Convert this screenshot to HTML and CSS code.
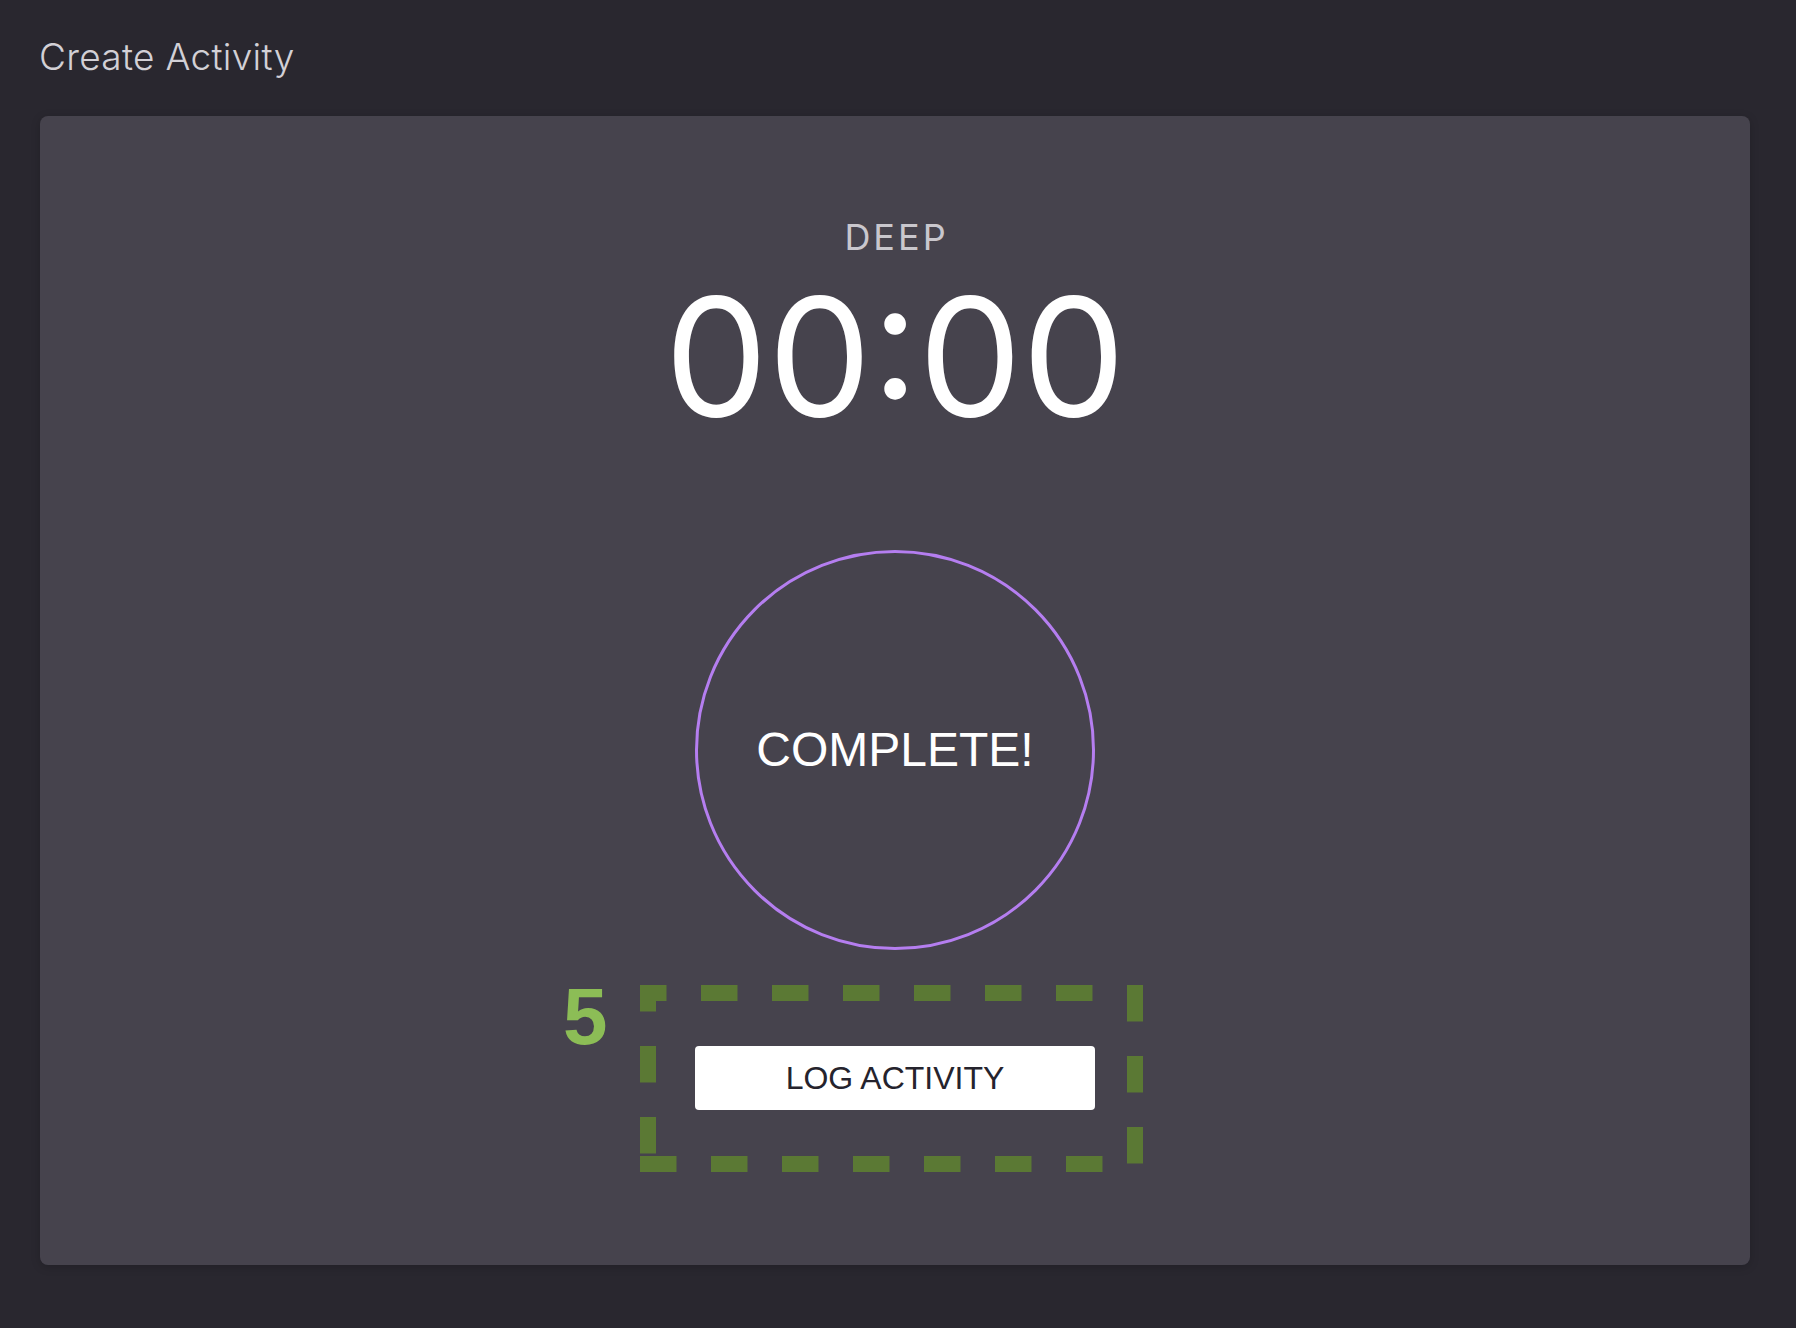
FILE: index.html
```html
<!DOCTYPE html>
<html lang="en">
<head>
<meta charset="utf-8">
<title>Create Activity</title>
<link rel="stylesheet" href="styles.css">
</head>
<body>
<div class="page">
  <h1 class="title">Create Activity</h1>
  <section class="card">
    <div class="mode">DEEP</div>
    <div class="timer">00:00</div>
    <div class="circle"><span class="circle-label">COMPLETE!</span></div>
    <div class="log-wrap">
      <button class="log-btn" type="button">LOG ACTIVITY</button>
      <span class="annot-num">5</span>
      <svg class="annot-box" width="503" height="187" viewBox="0 0 503 187" aria-hidden="true">
        <g fill="none" stroke="#5b7934" stroke-width="16">
          <line x1="0" y1="8" x2="487" y2="8" stroke-dasharray="36.5 34.5" stroke-dashoffset="10"/>
          <line x1="8" y1="0" x2="8" y2="172" stroke-dasharray="36.5 34.5" stroke-dashoffset="10"/>
          <line x1="495" y1="0" x2="495" y2="178.5" stroke-dasharray="36.5 34.5"/>
          <line x1="0" y1="179" x2="487" y2="179" stroke-dasharray="36.5 34.5"/>
        </g>
      </svg>
    </div>
  </section>
</div>
</body>
</html>
```

FILE: styles.css
```css
html, body {
  margin: 0;
  background: #29272f;
}

.page {
  padding: 38px 46px 63px 40px;
}

.title {
  margin: 0 0 41px -1px;
  font-family: Inter, "Noto Sans", sans-serif;
  font-weight: 300;
  font-size: 37px;
  line-height: 1;
  letter-spacing: 0.3px;
  color: #d2d0d6;
}

.card {
  box-sizing: border-box;
  height: 1149px;
  padding-top: 103px;
  background: #46434d;
  border-radius: 8px;
  box-shadow: 0 2px 10px rgba(0, 0, 0, 0.18);
  display: flex;
  flex-direction: column;
  align-items: center;
}

.mode {
  padding-left: 3px;
  font-family: Inter, "Noto Sans", sans-serif;
  font-weight: 400;
  font-size: 36px;
  line-height: 1;
  letter-spacing: 3px;
  color: #c9c7cd;
}

.timer {
  margin-top: 20px;
  font-family: Inter, "Noto Sans", sans-serif;
  font-weight: 400;
  font-size: 164px;
  line-height: 1;
  color: #ffffff;
}

.circle {
  box-sizing: border-box;
  width: 400px;
  height: 400px;
  margin-top: 111px;
  border: 3px solid #b57ef0;
  border-radius: 50%;
  display: flex;
  align-items: center;
  justify-content: center;
}

.circle-label {
  font-family: "Liberation Sans", Arial, sans-serif;
  font-size: 48px;
  line-height: 1;
  color: #ffffff;
}

.log-wrap {
  position: relative;
  margin-top: 96px;
}

.log-btn {
  display: block;
  width: 400px;
  height: 64px;
  padding: 0;
  border: none;
  border-radius: 4px;
  background: #ffffff;
  font-family: "Liberation Sans", Arial, sans-serif;
  font-size: 32px;
  color: #25232d;
}

.annot-num {
  position: absolute;
  left: -132px;
  top: -69px;
  font-family: "Liberation Sans", Arial, sans-serif;
  font-weight: 700;
  font-size: 80px;
  line-height: 1;
  color: #8cbd56;
}

.annot-box {
  position: absolute;
  left: -55px;
  top: -61px;
  pointer-events: none;
}
```
